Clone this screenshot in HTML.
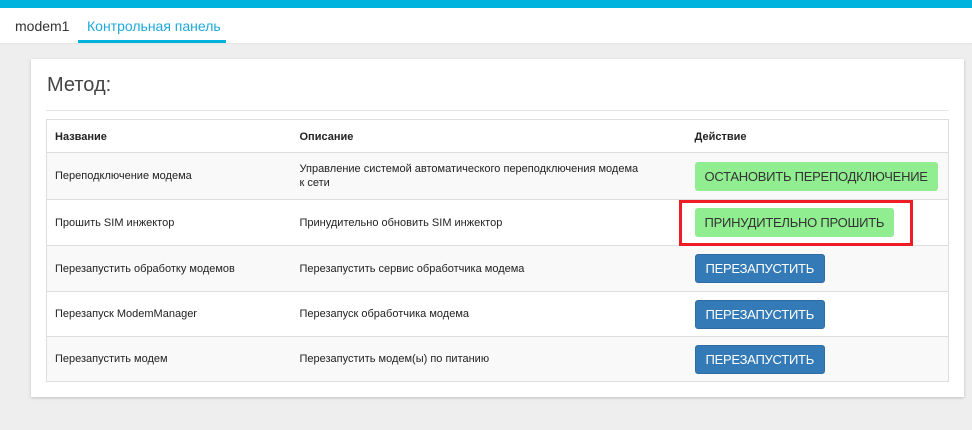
<!DOCTYPE html><html><head><meta charset="utf-8"><style>
*{box-sizing:border-box;margin:0;padding:0}
body{width:972px;height:430px;background:#eee;font-family:"Liberation Sans",sans-serif;position:relative;overflow:hidden;color:#222}
.top{position:absolute;left:0;top:0;width:972px;height:8px;background:#00b3df}
.tabs{position:absolute;left:0;top:8px;width:972px;height:35px;background:#fff;box-shadow:0 1px 2px rgba(0,0,0,.05)}
.t1{position:absolute;left:15px;top:10px;font-size:14px;color:#333}
.t2{position:absolute;left:78px;top:0;height:35px;width:148px;border-bottom:3px solid #00b3df;color:#1ea9dc;font-size:14px;padding:10px 0 0 9px}
.card{position:absolute;left:31px;top:59px;width:933px;height:338px;background:#fff;box-shadow:0 1px 3px rgba(0,0,0,.2)}
h2{position:absolute;left:16px;top:15px;font-weight:normal;font-size:20px;color:#444}
.hr{position:absolute;left:15px;top:51px;width:903px;height:1px;background:#e5e5e5}
table{position:absolute;left:15px;top:60px;width:903px;border-collapse:collapse;border:1px solid #ddd;font-size:11px;color:#222;table-layout:fixed}
td,th{border-top:1px solid #ddd;text-align:left;vertical-align:middle;padding:0 8px;line-height:14px}
th{height:33px;font-weight:bold;padding-top:2px}
tr:nth-child(even) td{background:#f9f9f9}
.b{display:inline-block;white-space:nowrap;height:29px;line-height:29px;padding:0 10px;border-radius:3px;font-size:13px;letter-spacing:-0.25px}
.g{background:#90ee90;color:#333}.bl{background:#337ab7;color:#fff;border:1px solid #2e6da4;line-height:27px}
.red{position:absolute;left:679px;top:200px;width:234px;height:46px;border:3px solid #ee1c25}
</style></head><body>
<div class="top"></div>
<div class="tabs"><div class="t1">modem1</div><div class="t2">Контрольная панель</div></div>
<div class="card"><h2>Метод:</h2><div class="hr"></div>
<table>
<tr><th style="width:245px">Название</th><th style="width:395px">Описание</th><th>Действие</th></tr>
<tr style="height:47px"><td>Переподключение модема</td><td>Управление системой автоматического переподключения модема<br>к сети</td><td><span class="b g">ОСТАНОВИТЬ ПЕРЕПОДКЛЮЧЕНИЕ</span></td></tr>
<tr style="height:46px"><td>Прошить SIM инжектор</td><td>Принудительно обновить SIM инжектор</td><td><span class="b g">ПРИНУДИТЕЛЬНО ПРОШИТЬ</span></td></tr>
<tr style="height:46px"><td>Перезапустить обработку модемов</td><td>Перезапустить сервис обработчика модема</td><td><span class="b bl">ПЕРЕЗАПУСТИТЬ</span></td></tr>
<tr style="height:45px"><td>Перезапуск ModemManager</td><td>Перезапуск обработчика модема</td><td><span class="b bl">ПЕРЕЗАПУСТИТЬ</span></td></tr>
<tr style="height:45px"><td>Перезапустить модем</td><td>Перезапустить модем(ы) по питанию</td><td><span class="b bl">ПЕРЕЗАПУСТИТЬ</span></td></tr>
</table></div>
<div class="red"></div>
</body></html>
